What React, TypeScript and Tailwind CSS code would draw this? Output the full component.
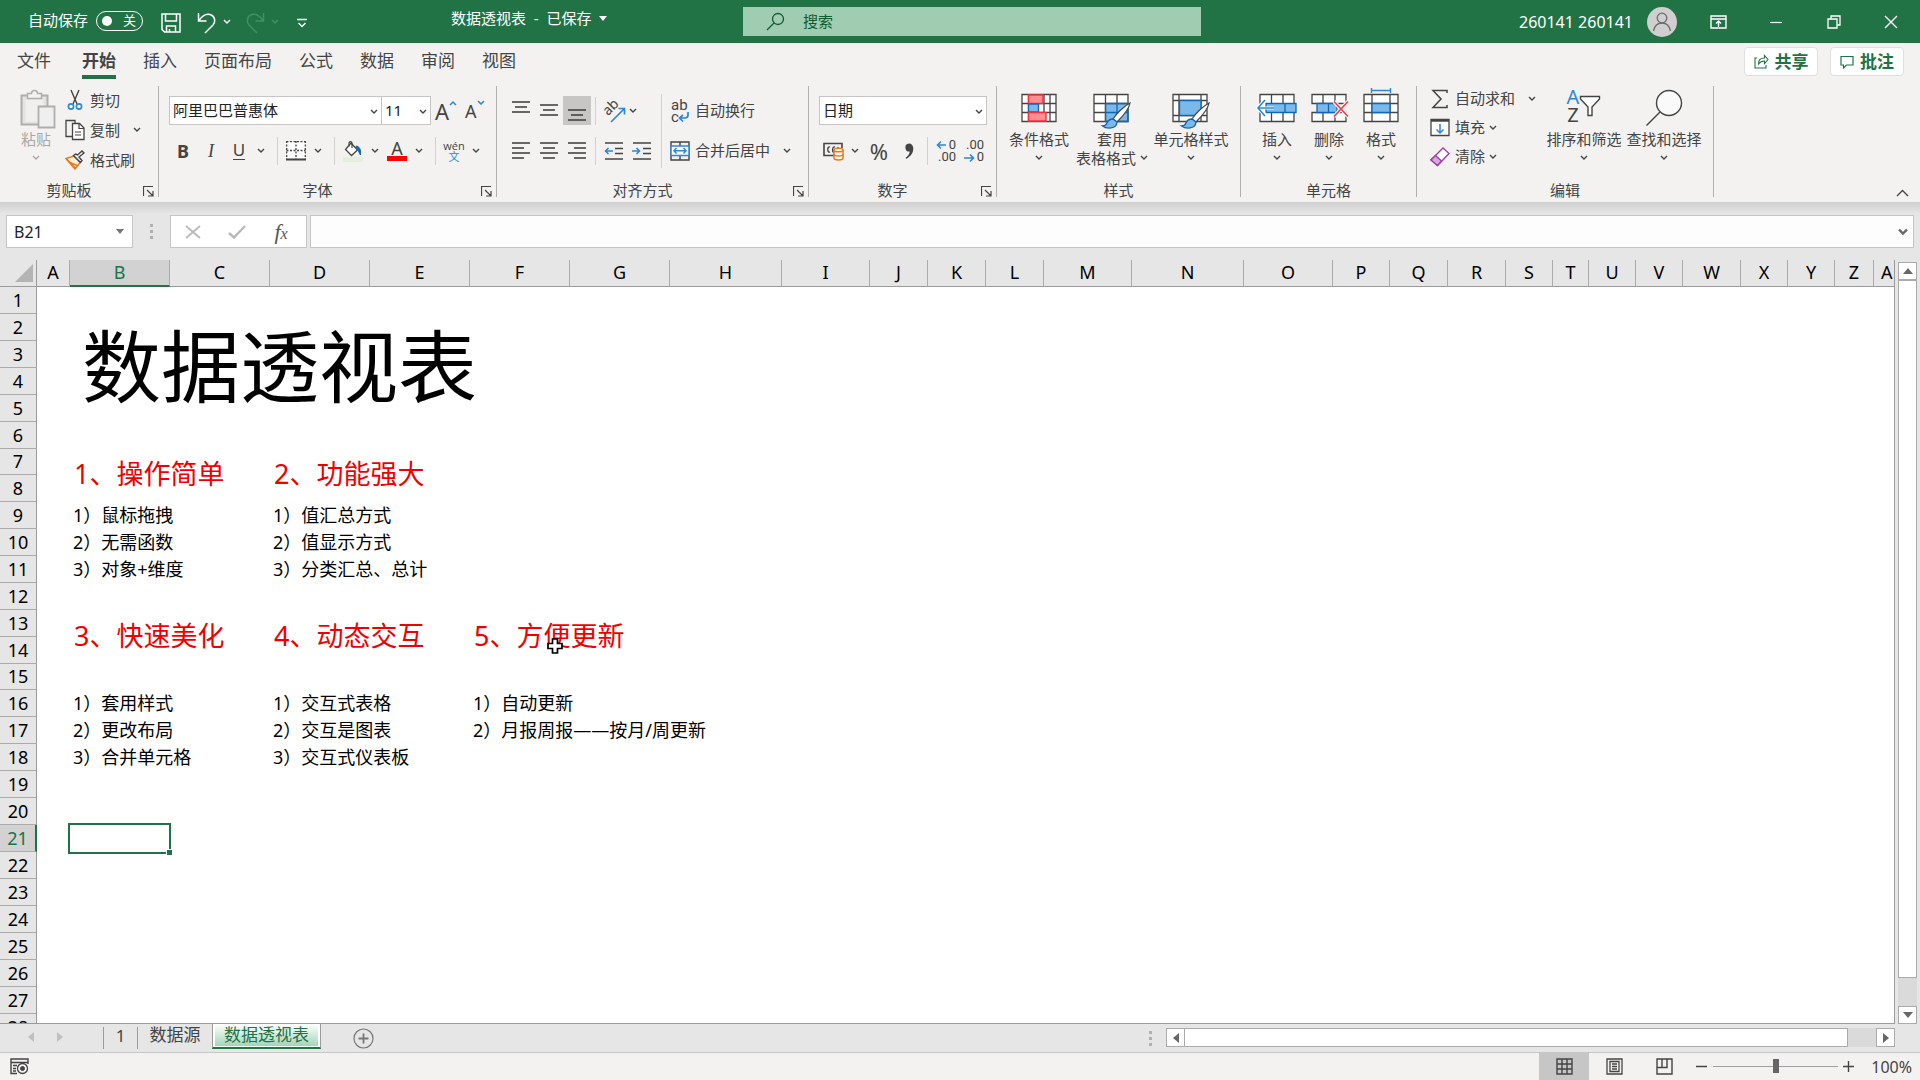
import type { ReactNode } from 'react';
import { clsx } from 'clsx';

const INK = '#444444';
const BLUE = '#2b88d8';

const tabs = ['文件', '开始', '插入', '页面布局', '公式', '数据', '审阅', '视图'];

const columns = [
  { name: 'A', width: 33 },
  { name: 'B', width: 100 },
  { name: 'C', width: 100 },
  { name: 'D', width: 100 },
  { name: 'E', width: 100 },
  { name: 'F', width: 100 },
  { name: 'G', width: 100 },
  { name: 'H', width: 112 },
  { name: 'I', width: 88 },
  { name: 'J', width: 58 },
  { name: 'K', width: 58 },
  { name: 'L', width: 58 },
  { name: 'M', width: 88 },
  { name: 'N', width: 112 },
  { name: 'O', width: 89 },
  { name: 'P', width: 57 },
  { name: 'Q', width: 58 },
  { name: 'R', width: 58 },
  { name: 'S', width: 47 },
  { name: 'T', width: 36 },
  { name: 'U', width: 47 },
  { name: 'V', width: 47 },
  { name: 'W', width: 58 },
  { name: 'X', width: 47 },
  { name: 'Y', width: 47 },
  { name: 'Z', width: 39 },
];

type Cell = {
  row: number;
  col: string;
  text: string;
  kind?: 'title' | 'heading';
};

const cells: Cell[] = [
  { row: 2, col: 'B', text: '数据透视表', kind: 'title' },
  { row: 7, col: 'B', text: '1、操作简单', kind: 'heading' },
  { row: 7, col: 'D', text: '2、功能强大', kind: 'heading' },
  { row: 9, col: 'B', text: '1）鼠标拖拽' },
  { row: 10, col: 'B', text: '2）无需函数' },
  { row: 11, col: 'B', text: '3）对象+维度' },
  { row: 9, col: 'D', text: '1）值汇总方式' },
  { row: 10, col: 'D', text: '2）值显示方式' },
  { row: 11, col: 'D', text: '3）分类汇总、总计' },
  { row: 13, col: 'B', text: '3、快速美化', kind: 'heading' },
  { row: 13, col: 'D', text: '4、动态交互', kind: 'heading' },
  { row: 13, col: 'F', text: '5、方便更新', kind: 'heading' },
  { row: 16, col: 'B', text: '1）套用样式' },
  { row: 17, col: 'B', text: '2）更改布局' },
  { row: 18, col: 'B', text: '3）合并单元格' },
  { row: 16, col: 'D', text: '1）交互式表格' },
  { row: 17, col: 'D', text: '2）交互是图表' },
  { row: 18, col: 'D', text: '3）交互式仪表板' },
  { row: 16, col: 'F', text: '1）自动更新' },
  { row: 17, col: 'F', text: '2）月报周报——按月/周更新' },
];

const colIndex = (name: string) => columns.findIndex((c) => c.name === name);

// Size of the merged block each kind of cell takes up
function spanOf(cell: Cell) {
  if (cell.kind === 'title') return { cols: 5, rows: 4 };
  if (cell.kind === 'heading') return { cols: 2, rows: 2 };
  return { cols: 1, rows: 1 };
}

function isCovered(row: number, col: number) {
  return cells.some((cell) => {
    const { cols, rows } = spanOf(cell);
    const start = colIndex(cell.col);
    const inside = row >= cell.row && row < cell.row + rows && col >= start && col < start + cols;
    return inside && !(row === cell.row && col === start);
  });
}

/* ---------- icons ---------- */

function Icon({ w, h, children, color = INK }: { w: number; h: number; children: ReactNode; color?: string }) {
  return (
    <svg width={w} height={h} viewBox={`0 0 ${w} ${h}`} fill="none" stroke={color} className="shrink-0" aria-hidden="true">
      {children}
    </svg>
  );
}

function Chevron({ color = INK }: { color?: string }) {
  return (
    <Icon w={8} h={6} color={color}>
      <path d="M1 1l3 3 3-3" strokeWidth="1.4" />
    </Icon>
  );
}

const Lines = ({ rows }: { rows: [number, number, number][] }) => (
  <Icon w={20} h={22}>
    {rows.map(([y, x1, x2]) => (
      <path key={y} d={`M${x1} ${y}H${x2}`} strokeWidth="1.6" />
    ))}
  </Icon>
);

const PasteIcon = () => (
  <Icon w={36} h={40} color="#b0aeac">
    <path d="M1.5 6.5h26v29h-26z" fill="#e3e2e1" strokeWidth="2" />
    <path d="M5.5 10.5h18v22h-18z" fill="#f0efee" strokeWidth="0" />
    <path d="M7.5 9.5v-5h4c0-2 1.5-3 3-3s3 1 3 3h4v5z" fill="#f3f2f1" strokeWidth="1.5" />
    <path d="M18.5 17.5h16v21h-16z" fill="#f0eff0" strokeWidth="1.8" />
  </Icon>
);

const CutIcon = () => (
  <Icon w={16} h={22}>
    <path d="M4 1l6 14M12 1L6 15" strokeWidth="1.4" />
    <circle cx="4" cy="17.5" r="2.6" stroke={BLUE} strokeWidth="1.6" />
    <circle cx="12" cy="17.5" r="2.6" stroke={BLUE} strokeWidth="1.6" />
  </Icon>
);

const CopyIcon = () => (
  <Icon w={20} h={22}>
    <path d="M8 17.5H1V1.5h9V4" strokeWidth="1.3" />
    <path d="M7.500 4.500h7l4.500 4.500v11.500H7.500z" fill="#fff" strokeWidth="1.3" />
    <path d="M14 4.500V9.500h5M10 13h6M10 16h6" strokeWidth="1.2" />
  </Icon>
);

const PainterIcon = () => (
  <Icon w={20} h={20}>
    <path d="M1 8.500l8-2.500 6 6.500-5 6.500z" fill="#fdf0e0" stroke="#e8791c" strokeWidth="1.5" />
    <path d="M1.500 9l9 9.500M4 12l8 3.500" stroke="#e8791c" strokeWidth="1.5" />
    <path d="M8.500 5.500l7 7 1.500-2-3-3.500 5-4-2-2-4.500 4L10.500 4z" fill="#f3f2f1" strokeWidth="1.4" />
  </Icon>
);

const LauncherIcon = () => (
  <Icon w={11} h={11}>
    <path d="M.5 10V.5H10M4 4l5.500 5.500M10 5v5H5" strokeWidth="1.2" />
  </Icon>
);

const BordersIcon = () => (
  <Icon w={20} h={20}>
    <path d="M1 1h18v16H1z" fill="#fff" stroke="none" />
    <path d="M.5 .7h19M.5 9.500h19M.7 0v18M10 0v18M19.300 0v18" strokeDasharray="2 1.5" strokeWidth="1.3" />
    <path d="M0 18.500h20" strokeWidth="2" />
  </Icon>
);

const FillIcon = () => (
  <Icon w={22} h={22}>
    <path d="M9 3l6.500 7-6 5.500-6-6z" fill="#fff" strokeWidth="1.3" />
    <path d="M7 6.500V3c0-1.800 3-1.800 3 0v5" strokeWidth="1.2" />
    <path d="M14 6c3.500.5 5 3 4.500 9-1.500-1.500-1.500-4-3-5.500z" fill="#1267b4" stroke="#1267b4" />
    <path d="M1 17h20v5H1z" fill="#e2f0dc" stroke="none" />
  </Icon>
);

const OrientIcon = () => (
  <span className="relative flex size-6 items-center justify-center">
    <span className="-translate-x-1 -translate-y-1 -rotate-45 text-sm leading-none">ab</span>
    <span className="absolute right-0 bottom-0">
      <Icon w={16} h={17} color={BLUE}>
        <path d="M1 16L14 3M8.500 2.500h6v6" strokeWidth="1.7" />
      </Icon>
    </span>
  </span>
);

const IndentIcon = ({ out = false }: { out?: boolean }) => (
  <Icon w={20} h={20}>
    <path d="M1 2h18M11 7.500h8M11 12.500h8M1 18h18" strokeWidth="1.5" />
    <path d={out ? 'M9 10H1.500M4.500 7l-3 3 3 3' : 'M0 10h7.500M4.500 7l3 3-3 3'} stroke={BLUE} strokeWidth="1.6" />
  </Icon>
);

const WrapIcon = () => (
  <span className="relative block h-6 w-[18px] text-left font-[Roboto,sans-serif] text-[15px] leading-3">
    ab
    <br />c
    <span className="absolute right-0 bottom-0">
      <Icon w={11} h={12} color={BLUE}>
        <path d="M10 1v3c0 2-1 3-3 3H2M5 4L1.500 7 5 10.500" strokeWidth="1.7" />
      </Icon>
    </span>
  </span>
);

const MergeIcon = () => (
  <Icon w={20} h={20}>
    <path d="M1 1h18v18H1zM10 1v4M10 15v4" strokeWidth="1.4" />
    <path d="M1 5h18v9.500H1z" fill="#fff" stroke={BLUE} strokeWidth="1.5" />
    <path d="M4 9.800h12M6.500 7L4 9.800l2.500 2.700M13.500 7L16 9.800l-2.500 2.700" stroke={BLUE} strokeWidth="1.5" />
  </Icon>
);

const AccountingIcon = () => (
  <Icon w={21} h={20}>
    <path d="M11 14.500H1v-12h18V7" strokeWidth="1.6" />
    <path d="M7 6c-3-1-3 6 0 5M12 6c-3-1-3 5-1 5.500M15 6v2" strokeWidth="1.4" />
    <path d="M11 9v8c0 2.500 9 2.500 9 0V9" fill="#fff" stroke="#e8791c" strokeWidth="1.5" />
    <ellipse cx="15.500" cy="9" rx="4.500" ry="1.800" fill="#fff" stroke="#e8791c" strokeWidth="1.5" />
    <path d="M11 13.200c0 2.300 9 2.300 9 0" stroke="#e8791c" strokeWidth="1.4" />
  </Icon>
);

const CommaIcon = () => (
  <Icon w={12} h={18}>
    <path d="M6 1.500a4 4 0 1 0 .8 8C6.500 12 5 14 2.500 15.800l.8 1C7.500 14.500 10.300 11 10.300 6.500 10.300 3.500 8.500 1.500 6 1.500z" fill={INK} stroke="none" />
  </Icon>
);

const DecimalIcon = ({ more = false }: { more?: boolean }) => (
  <span className="relative block h-6 w-5 text-right font-[Roboto,sans-serif] text-[13px] leading-3">
    {more ? '0' : '.00'}
    <br />
    {more ? '.00' : '0'}
    <span className={clsx('absolute left-0', more ? 'top-px' : 'bottom-0')}>
      <Icon w={11} h={10} color={BLUE}>
        <path d={more ? 'M10 5H1.500M5 1.500L1.500 5 5 8.500' : 'M0 5h9.500M6 1.500L9.500 5 6 8.500'} strokeWidth="1.6" />
      </Icon>
    </span>
  </span>
);

const BrushTip = () => (
  <>
    <path d="M38 9c-6 3-14 11-17 16l4 3c5-5 12-13 13-19z" fill="#fff" strokeWidth="1.2" />
    <path d="M21 25c-3 0-5 1.500-6 4-.8 2-2.500 3-4.500 3 4 3 14 3.500 14.500-4z" fill="#7bb9ea" stroke="#1267b4" strokeWidth="1.3" />
  </>
);

const ConditionalIcon = () => (
  <Icon w={38} h={40}>
    <path d="M2 6.500h34v27H2zM2 15.500h34M2 24.500h34M8.500 6.500v27M24 6.500v27M30 6.500v27" fill="#fff" strokeWidth="1.3" />
    <path d="M8.500 7h14.500v8.500H8.500z" fill="#ff8e95" stroke="#f3303a" strokeWidth="1.4" />
    <path d="M8.500 16h10v8h-10z" fill="#7bb9ea" stroke="#1267b4" strokeWidth="1.3" />
    <path d="M8.500 24.500h17.500V33H8.500z" fill="#ff8e95" stroke="#f3303a" strokeWidth="1.4" />
  </Icon>
);

const TableStyleIcon = () => (
  <Icon w={40} h={42}>
    <path d="M2 6.500h34v27H2z" fill="#fff" stroke="none" />
    <path d="M13.500 15.500H36v18H13.500z" fill="#7bb9ea" stroke="none" />
    <path d="M2 6.500h34v27H2zM2 15.500h34M2 24.500h12M13.500 6.500v27M25 6.500v9" strokeWidth="1.3" />
    <path d="M13.500 15.500H36v18H13.500zM13.500 24.500H36M25 15.500v18" stroke="#1267b4" strokeWidth="1.3" />
    <g transform="translate(0 6)">
      <BrushTip />
    </g>
  </Icon>
);

const CellStyleIcon = () => (
  <Icon w={40} h={42}>
    <path d="M2 6.500h34v27H2zM2 12.500h34M2 27.500h34M8 6.500v27M30 6.500v27" fill="#fff" strokeWidth="1.3" />
    <path d="M8.500 12.500h21.500v15H8.500z" fill="#7bb9ea" stroke="#1267b4" strokeWidth="1.3" />
    <g transform="translate(0 6)">
      <BrushTip />
    </g>
  </Icon>
);

const InsertIcon = () => (
  <Icon w={42} h={40}>
    <path d="M4 6.500h34v27H4zM15.500 6.500v27M27 6.500v27" fill="#fff" strokeWidth="1.3" />
    <path d="M10 15.500h30v9H10z" fill="#7bb9ea" stroke="#1267b4" strokeWidth="1.3" />
    <path d="M29 15.500v9" stroke="#1267b4" strokeWidth="1.3" />
    <path d="M10 11.500L2 20l8 8" stroke="#fff" strokeWidth="4" />
    <path d="M18 20H2" stroke="#fff" strokeWidth="3" />
    <path d="M18 20H2M9 12L2 20l7 8" stroke={BLUE} strokeWidth="1.6" />
  </Icon>
);

const DeleteIcon = () => (
  <Icon w={40} h={40}>
    <path d="M3 6.500h34v9H3zM3 24.500h34v9H3zM14 6.500v9M26 6.500v9M14 24.500v9M26 24.500v9" fill="#fff" strokeWidth="1.3" />
    <path d="M8 15.500h20v9H8zM19.500 15.500v9" fill="#7bb9ea" stroke="#1267b4" strokeWidth="1.3" />
    <path d="M25 13.500l14 15M39 13.500l-14 15" stroke="#f3f2f1" strokeWidth="4" />
    <path d="M25 13.500l14 15M39 13.500l-14 15" stroke="#e8404a" strokeWidth="1.6" />
  </Icon>
);

const FormatIcon = () => (
  <Icon w={38} h={40}>
    <path d="M2 6.500h34v27H2zM2 15.500h34M2 24.500h34M10 6.500v27M28 6.500v27" fill="#fff" strokeWidth="1.3" />
    <path d="M10 15.500h18v9H10z" fill="#7bb9ea" stroke="#1267b4" strokeWidth="1.3" />
    <path d="M9.500 2.500h19M9.500 0v5M28.500 0v5" stroke={BLUE} strokeWidth="1.4" />
  </Icon>
);

const SumIcon = () => (
  <Icon w={18} h={20}>
    <path d="M16 4V1.500H2l8 8.500-8 8.500h14V16" strokeWidth="1.5" />
  </Icon>
);

const FillDownIcon = () => (
  <Icon w={20} h={20}>
    <path d="M1 1.500h18v16H1z" fill="#fff" strokeWidth="1.3" />
    <path d="M1 2.500h18" strokeWidth="2.5" />
    <path d="M10 6v9M6.500 11.500L10 15l3.500-3.500" stroke={BLUE} strokeWidth="1.5" />
  </Icon>
);

const EraserIcon = () => (
  <Icon w={20} h={20} color="#a03fa8">
    <path d="M1 13L13 1l6 5.500L7.500 18.500z" fill="#fff" strokeWidth="1.4" />
    <path d="M1 13l4.500-4.500 6 5.500-4 4.500z" fill="#dca4e0" strokeWidth="1.4" />
  </Icon>
);

const SortFilterIcon = () => (
  <span className="flex items-center">
    <span className="flex flex-col text-xl leading-[18px]">
      <span className="text-[#2b88d8]">A</span>
      <span>Z</span>
    </span>
    <Icon w={22} h={24}>
      <path d="M1.500 2.500h19v2.500l-7.500 8v8.500H9v-8.500l-7.500-8z" fill="#fff" strokeWidth="1.4" />
    </Icon>
  </span>
);

const FindIcon = () => (
  <Icon w={38} h={40}>
    <circle cx="24" cy="15" r="12.500" fill="#fbfafa" strokeWidth="1.4" />
    <path d="M15 24L1.500 37.500" strokeWidth="1.5" />
  </Icon>
);

/* ---------- ribbon parts ---------- */

function Group({ label, launcher, className, children }: { label: string; launcher?: boolean; className: string; children: ReactNode }) {
  return (
    <section aria-label={label} className={clsx('flex h-[111px] shrink-0 flex-col border-r border-[#b3b1af]', className)}>
      <div className="flex h-[97px] items-start">{children}</div>
      <div className={clsx('relative flex h-[14px] items-center justify-center leading-none', launcher && 'pr-5')}>
        <span>{label}</span>
        {launcher && (
          <button aria-label={`${label}设置`} className="absolute right-1 bottom-0">
            <LauncherIcon />
          </button>
        )}
      </div>
    </section>
  );
}

function SmallButton({ icon, label, caret }: { icon: ReactNode; label: string; caret?: 'near' | 'far' }) {
  return (
    <button className="flex items-center whitespace-nowrap">
      <span className="flex w-[30px] items-center justify-center">{icon}</span>
      {label}
      {caret && (
        <span className={clsx('flex w-4 justify-center', caret === 'far' && 'ml-[9px]')}>
          <Chevron />
        </span>
      )}
    </button>
  );
}

function BigButton({ icon, label, second, className }: { icon: ReactNode; label: string; second?: string; className: string }) {
  return (
    <button className={clsx('flex flex-col items-center whitespace-nowrap', className)}>
      <span className="flex h-[43px] items-start justify-center pt-[2px]">{icon}</span>
      <span className="leading-5">{label}</span>
      <span className="flex h-[18px] items-center gap-1 leading-[18px]">
        {second}
        <Chevron />
      </span>
    </button>
  );
}

function Tool({ label, on, wide, children }: { label: string; on?: boolean; wide?: boolean; children: ReactNode }) {
  return (
    <button aria-label={label} className={clsx('flex h-[29px] items-center justify-center', wide ? 'w-8' : 'w-7', on && 'bg-[#c8c6c4]')}>
      {children}
    </button>
  );
}

const ToolCaret = ({ label }: { label: string }) => (
  <button aria-label={label} className="flex h-[29px] w-4 items-center justify-center">
    <Chevron />
  </button>
);

const Divider = ({ near }: { near?: boolean }) => <span className={clsx('mr-1 h-7 w-px bg-[#d2d0ce]', near ? 'ml-1' : 'ml-2')} />;

function Combo({ label, value, className }: { label: string; value: string; className: string }) {
  return (
    <div className={clsx('relative h-[29px] border border-[#c8c6c4] bg-white', className)}>
      <select aria-label={label} className="h-full w-full appearance-none pl-[3px] text-[#222]">
        <option>{value}</option>
      </select>
      <span className="pointer-events-none absolute top-3 right-[3px]">
        <Chevron />
      </span>
    </div>
  );
}

function TitleBar() {
  return (
    <header className="grid h-[43px] shrink-0 grid-cols-[743fr_458fr_719fr] bg-[#217346] text-white">
      <div className="flex items-center pb-[2px] pl-7">
        <span id="autosave">自动保存</span>
        <button role="switch" aria-checked="false" aria-labelledby="autosave" className="ml-2 flex h-5 w-[47px] items-center justify-between rounded-full border border-white pr-[6px] pl-[5px]">
          <span className="size-[10px] rounded-full bg-white" />
          <span className="text-[13px] leading-none">关</span>
        </button>
        <button aria-label="保存" className="ml-[18px] pt-1">
          <Icon w={20} h={20} color="#fff">
            <path d="M1 1h18v18H3.500L1 16.500zM4.500 1v7h11V1M5.500 19v-6h9v6M8.500 19v-3" strokeWidth="1.5" />
          </Icon>
        </button>
        <button aria-label="撤消" className="ml-4 pt-1">
          <Icon w={20} h={22} color="#fff">
            <path d="M1.500 1v8h8M2 8.500C5 4 9 1.500 13 2.500c5 1.500 6 7 3 10.500l-8 8" strokeWidth="1.5" />
          </Icon>
        </button>
        <button aria-label="撤消列表" className="ml-[6px] pt-[2px]">
          <Chevron color="#fff" />
        </button>
        <button aria-label="恢复" className="ml-[14px] pt-1">
          <Icon w={20} h={22} color="#3f9062">
            <path d="M18.500 1v8h-8M18 8.500C15 4 11 1.500 7 2.500c-5 1.500-6 7-3 10.500l8 8" strokeWidth="1.5" />
          </Icon>
        </button>
        <button aria-label="恢复列表" className="ml-[6px] pt-[2px]">
          <Chevron color="#3f9062" />
        </button>
        <button aria-label="自定义快速访问工具栏" className="ml-[18px] pt-1">
          <Icon w={10} h={10} color="#fff">
            <path d="M0 1.500h10M1.500 5L5 8.500 8.500 5" strokeWidth="1.4" />
          </Icon>
        </button>
        <button className="mr-auto ml-36 flex items-center gap-2 pb-1">
          数据透视表&nbsp; - &nbsp;已保存
          <Icon w={8} h={5} color="none">
            <path d="M0 0h8L4 5z" fill="#fff" />
          </Icon>
        </button>
      </div>
      <label className="my-[7px] flex items-center bg-[#a0cdb2] pl-[23px] text-[#0f5a2f]">
        <Icon w={20} h={20} color="#0f5a2f">
          <circle cx="12" cy="7" r="5.500" strokeWidth="1.3" />
          <path d="M8 11L1 18" strokeWidth="1.3" />
        </Icon>
        <input type="text" aria-label="搜索" placeholder="搜索" className="ml-[17px] min-w-0 flex-1 bg-transparent outline-none placeholder:text-[#0f5a2f]" />
      </label>
      <div className="flex items-center justify-end">
        <span className="text-base leading-none">260141 260141</span>
        <button aria-label="帐户" className="mr-3 ml-[14px] flex size-[30px] items-center justify-center rounded-full bg-[#d0cfcf]">
          <Icon w={20} h={20} color="#6b6b6b">
            <circle cx="10" cy="6" r="4.800" strokeWidth="1.3" />
            <path d="M1.500 19c1-5 4-8 8.500-8s7.500 3 8.500 8" strokeWidth="1.3" />
          </Icon>
        </button>
        <button aria-label="功能区显示选项" className="flex w-[58px] justify-center">
          <Icon w={17} h={14} color="#fff">
            <path d="M1 1h15v12H1zM1 4h15M8.500 12V6M6 8.500L8.500 6 11 8.500" strokeWidth="1.4" />
          </Icon>
        </button>
        <button aria-label="最小化" className="flex w-[58px] justify-center">
          <Icon w={14} h={14} color="#fff">
            <path d="M1 7.500h12" strokeWidth="1.2" />
          </Icon>
        </button>
        <button aria-label="向下还原" className="flex w-[57px] justify-center">
          <Icon w={14} h={14} color="#fff">
            <path d="M1 4h9v9H1zM4 4V1h9v9h-3" strokeWidth="1.3" />
          </Icon>
        </button>
        <button aria-label="关闭" className="flex w-[58px] justify-center">
          <Icon w={14} h={14} color="#fff">
            <path d="M1 1l12 12M13 1L1 13" strokeWidth="1.4" />
          </Icon>
        </button>
      </div>
    </header>
  );
}

function TabStrip() {
  return (
    <div className="flex h-9 shrink-0 items-stretch bg-[#f3f2f1] pr-4 pl-[17px]">
      <nav className="flex gap-[27px] text-[17px]">
        {tabs.map((tab) => (
          <a
            key={tab}
            href="#"
            className={clsx('flex items-center border-y-4 border-transparent first:mr-1', tab === '开始' && 'border-b-[#217346] font-bold')}
          >
            {tab}
          </a>
        ))}
      </nav>
      <div className="mt-1 ml-auto flex gap-3 text-[17px] font-bold text-[#217346]">
        <button className="flex h-[29px] w-[74px] items-center justify-center gap-[6px] rounded-sm border border-[#e1dfdd] bg-white">
          <Icon w={15} h={15} color="#217346">
            <path d="M3 4H1v10h11v-3M4.500 10c0-4 2-6 6-6V1.500L14 5.500l-3.500 4V7C7.500 7 6 8 4.500 10z" strokeWidth="1.1" />
          </Icon>
          共享
        </button>
        <button className="flex h-[29px] w-[74px] items-center justify-center gap-[6px] rounded-sm border border-[#e1dfdd] bg-white">
          <Icon w={14} h={14} color="#217346">
            <path d="M1 1.500h12v8.500H6.500L3.500 13v-3H1z" strokeWidth="1.2" />
          </Icon>
          批注
        </button>
      </div>
    </div>
  );
}

function Ribbon() {
  return (
    <div className="flex shrink-0 bg-[#f3f2f1] pt-[7px] pb-[5px]">
      <Group label="剪贴板" launcher className="w-[159px]">
        <button className="ml-[14px] flex w-12 flex-col items-center text-[#aaa8a6]">
          <span className="flex h-[43px] items-start pt-[3px]">
            <PasteIcon />
          </span>
          <span className="pr-1 leading-5">粘贴</span>
          <span className="flex h-[18px] items-center pr-1">
            <Chevron color="#aaa8a6" />
          </span>
        </button>
        <div className="-mt-px -ml-[2px] grid auto-rows-[30px] justify-items-start">
          <SmallButton icon={<CutIcon />} label="剪切" />
          <SmallButton icon={<CopyIcon />} label="复制" caret="far" />
          <SmallButton icon={<PainterIcon />} label="格式刷" />
        </div>
      </Group>

      <Group label="字体" launcher className="w-[338px]">
        <div className="ml-[10px] flex flex-col gap-[11px] pt-[10px]">
          <div className="flex items-center">
            <Combo label="字体" value="阿里巴巴普惠体" className="w-[213px]" />
            <Combo label="字号" value="11" className="-ml-px w-[50px]" />
            <button aria-label="增大字号" className="ml-1 flex items-start">
              <span className="text-[22px] leading-6">A</span>
              <Icon w={8} h={8} color={BLUE}>
                <path d="M1 6l3-3 3 3" strokeWidth="1.5" />
              </Icon>
            </button>
            <button aria-label="减小字号" className="ml-2 flex items-start">
              <span className="text-lg leading-7">A</span>
              <Icon w={8} h={8} color={BLUE}>
                <path d="M1 4l3 3 3-3" strokeWidth="1.5" />
              </Icon>
            </button>
          </div>
          <div className="flex items-center">
            <Tool label="加粗">
              <span className="text-lg leading-none font-bold">B</span>
            </Tool>
            <Tool label="倾斜">
              <span className="font-['Liberation_Serif',serif] text-lg leading-none italic">I</span>
            </Tool>
            <Tool label="下划线">
              <span className="border-b border-[#444] text-[17px] leading-[18px]">U</span>
            </Tool>
            <ToolCaret label="下划线选项" />
            <Divider />
            <Tool label="边框">
              <BordersIcon />
            </Tool>
            <ToolCaret label="边框选项" />
            <Divider />
            <Tool label="填充颜色">
              <FillIcon />
            </Tool>
            <ToolCaret label="填充颜色选项" />
            <Tool label="字体颜色">
              <span className="w-5 border-b-[5px] border-[#ff0000] text-center text-lg leading-4">A</span>
            </Tool>
            <ToolCaret label="字体颜色选项" />
            <Divider />
            <Tool label="拼音">
              <span className="flex flex-col items-center font-['Open_Sans','Noto_Sans_CJK_SC',sans-serif] text-[11px] leading-[11px]">
                wén
                <span className="text-[#2b88d8]">文</span>
              </span>
            </Tool>
            <ToolCaret label="拼音选项" />
          </div>
        </div>
      </Group>

      <Group label="对齐方式" launcher className="w-[312px]">
        <div className="ml-[10px] flex w-[150px] flex-col gap-[11px] pt-[10px]">
          <div className="flex items-center">
            <Tool label="顶端对齐">
              <Lines rows={[[2, 1, 19], [7, 4, 16], [12, 1, 19]]} />
            </Tool>
            <Tool label="垂直居中">
              <Lines rows={[[5, 1, 19], [10, 4, 16], [15, 1, 19]]} />
            </Tool>
            <Tool label="底端对齐" on>
              <Lines rows={[[10, 1, 19], [15, 4, 16], [20, 1, 19]]} />
            </Tool>
            <Divider near />
            <Tool label="方向">
              <OrientIcon />
            </Tool>
            <button aria-label="方向选项" className="flex h-[29px] w-[10px] items-center justify-center">
              <Chevron />
            </button>
          </div>
          <div className="flex items-center">
            <Tool label="左对齐">
              <Lines rows={[[3, 1, 19], [8, 1, 13], [13, 1, 19], [18, 1, 13]]} />
            </Tool>
            <Tool label="居中">
              <Lines rows={[[3, 1, 19], [8, 4, 16], [13, 1, 19], [18, 4, 16]]} />
            </Tool>
            <Tool label="右对齐">
              <Lines rows={[[3, 1, 19], [8, 7, 19], [13, 1, 19], [18, 7, 19]]} />
            </Tool>
            <Divider near />
            <Tool label="减少缩进量">
              <IndentIcon out />
            </Tool>
            <Tool label="增加缩进量">
              <IndentIcon />
            </Tool>
          </div>
        </div>
        <span className="mt-2 mr-1 ml-1 h-[74px] w-px bg-[#d2d0ce]" />
        <div className="-ml-px grid auto-rows-[29px] justify-items-start gap-[11px] pt-[10px]">
          <SmallButton icon={<WrapIcon />} label="自动换行" />
          <SmallButton icon={<MergeIcon />} label="合并后居中" caret="far" />
        </div>
      </Group>

      <Group label="数字" launcher className="w-[188px]">
        <div className="ml-[10px] flex flex-col gap-[11px] pt-[10px]">
          <Combo label="数字格式" value="日期" className="w-[168px]" />
          <div className="flex items-center">
            <Tool label="会计数字格式">
              <AccountingIcon />
            </Tool>
            <ToolCaret label="会计数字格式选项" />
            <Tool label="百分比样式" wide>
              <span className="text-[22px] leading-none">%</span>
            </Tool>
            <Tool label="千位分隔样式">
              <CommaIcon />
            </Tool>
            <Divider near />
            <Tool label="增加小数位数">
              <DecimalIcon more />
            </Tool>
            <Tool label="减少小数位数">
              <DecimalIcon />
            </Tool>
          </div>
        </div>
      </Group>

      <Group label="样式" className="w-[244px]">
        <BigButton icon={<ConditionalIcon />} label="条件格式" className="ml-[6px] w-[72px]" />
        <BigButton icon={<TableStyleIcon />} label="套用" second="表格格式" className="w-[74px]" />
        <BigButton icon={<CellStyleIcon />} label="单元格样式" className="w-[84px]" />
      </Group>

      <Group label="单元格" className="w-[176px]">
        <BigButton icon={<InsertIcon />} label="插入" className="ml-[10px] w-[52px]" />
        <BigButton icon={<DeleteIcon />} label="删除" className="w-[52px]" />
        <BigButton icon={<FormatIcon />} label="格式" className="w-[52px]" />
      </Group>

      <Group label="编辑" className="w-[297px]">
        <div className="-mt-[2px] ml-2 grid w-[119px] auto-rows-[29px] justify-items-start">
          <SmallButton icon={<SumIcon />} label="自动求和" caret="far" />
          <SmallButton icon={<FillDownIcon />} label="填充" caret="near" />
          <SmallButton icon={<EraserIcon />} label="清除" caret="near" />
        </div>
        <BigButton icon={<SortFilterIcon />} label="排序和筛选" className="w-20" />
        <BigButton icon={<FindIcon />} label="查找和选择" className="w-20" />
      </Group>

      <button aria-label="折叠功能区" className="mr-[11px] ml-auto self-end">
        <Icon w={13} h={8}>
          <path d="M1 7l5.500-5.500L12 7" strokeWidth="1.4" />
        </Icon>
      </button>
    </div>
  );
}

const Dots = () => (
  <span className="flex flex-col gap-[3px]" aria-hidden="true">
    <span className="size-[3px] bg-[#b0b0b0]" />
    <span className="size-[3px] bg-[#b0b0b0]" />
    <span className="size-[3px] bg-[#b0b0b0]" />
  </span>
);

function FormulaBar() {
  return (
    <div className="flex h-[58px] shrink-0 items-start bg-linear-to-b from-[#cfcfcf] to-[#e6e6e6] to-20% pt-[13px] pr-[6px] pl-[6px]">
      <div className="flex h-[33px] w-[127px] items-center border border-[#c6c6c6] bg-white pr-2">
        <input aria-label="名称框" defaultValue="B21" className="h-full min-w-0 flex-1 pl-[7px] text-base text-[#222] outline-none" />
        <button aria-label="名称列表">
          <Icon w={8} h={5} color="none">
            <path d="M0 0h8L4 5z" fill="#777" />
          </Icon>
        </button>
      </div>
      <div className="flex h-[33px] w-[37px] items-center justify-center">
        <Dots />
      </div>
      <div className="flex h-[33px] w-[137px] items-center border border-[#c6c6c6] bg-white">
        <button aria-label="取消" className="flex w-11 justify-center">
          <Icon w={16} h={14} color="#b9b9b9">
            <path d="M1 1l14 12M15 1L1 13" strokeWidth="1.8" />
          </Icon>
        </button>
        <button aria-label="输入" className="flex w-11 justify-center">
          <Icon w={18} h={14} color="#b9b9b9">
            <path d="M1 8l5 4.500L17 1" strokeWidth="2.4" />
          </Icon>
        </button>
        <button aria-label="插入函数" className="flex w-11 items-baseline justify-center font-['Liberation_Serif',serif] text-[#555] italic">
          <span className="text-[22px] leading-none">f</span>
          <span className="text-base leading-none">x</span>
        </button>
      </div>
      <div className="ml-[3px] flex h-[33px] flex-1 items-center border border-[#c6c6c6] bg-[#fdfdfd] pr-[5px]">
        <input aria-label="编辑栏" className="h-full min-w-0 flex-1 px-2 outline-none" />
        <button aria-label="展开编辑栏">
          <Icon w={10} h={8} color="#666">
            <path d="M1 1.500l4 4 4-4" strokeWidth="2.4" />
          </Icon>
        </button>
      </div>
    </div>
  );
}

function Sheet() {
  const rows = Array.from({ length: 28 }, (_, i) => i + 1);

  return (
    <div className="relative min-w-0 flex-1 overflow-hidden border-r border-b border-[#9b9b9b] bg-white">
      <table className="w-full table-fixed border-separate border-spacing-0 text-lg leading-none text-black">
        <colgroup>
          <col className="w-[37px]" />
          {columns.map((col) => (
            <col key={col.name} style={{ width: col.width }} />
          ))}
          <col />
        </colgroup>
        <thead>
          <tr className="h-[27px] bg-[#e6e6e6]">
            <th className="border-r border-b border-[#9b9b9b] p-0 pr-[3px]">
              <button aria-label="全选" className="ml-auto block">
                <Icon w={18} h={18} color="none">
                  <path d="M18 0v18H0z" fill="#b4b4b4" />
                </Icon>
              </button>
            </th>
            {columns.map((col) => (
              <th
                key={col.name}
                scope="col"
                className={clsx(
                  'h-[27px] border-r p-0 pb-[2px] font-normal',
                  col.name === 'B' ? 'border-r-[#ababab] border-b-2 border-b-[#217346] bg-[#d2d2d2] text-[#217346]' : 'border-b border-r-[#ababab] border-b-[#9b9b9b]'
                )}
              >
                {col.name}
              </th>
            ))}
            <th scope="col" className="border-b border-[#9b9b9b] p-0 pb-[2px] pl-[7px] text-left font-normal">
              A
            </th>
          </tr>
        </thead>
        <tbody>
          {rows.map((row) => (
            <tr key={row} className={row === 7 || row === 15 ? 'h-[26px]' : 'h-[27px]'}>
              <th
                scope="row"
                className={clsx(
                  'border-b border-b-[#ababab] p-0 pb-px font-normal',
                  row === 21 ? 'border-r-2 border-r-[#217346] bg-[#d2d2d2] text-[#217346]' : 'border-r border-r-[#9b9b9b] bg-[#e6e6e6]'
                )}
              >
                {row}
              </th>
              {columns.map((col, i) => {
                if (isCovered(row, i)) return null;
                const cell = cells.find((c) => c.row === row && c.col === col.name);
                if (!cell) {
                  return (
                    <td key={col.name} className="relative p-0">
                      {row === 21 && col.name === 'B' && (
                        <span className="absolute -inset-y-[2px] -right-px -left-[2px] border-2 border-[#217346]">
                          <span className="absolute -right-[3px] -bottom-[3px] size-[6px] border-t border-l border-white bg-[#217346]" />
                        </span>
                      )}
                    </td>
                  );
                }
                const span = spanOf(cell);
                return (
                  <td
                    key={col.name}
                    colSpan={span.cols}
                    rowSpan={span.rows}
                    className={clsx(
                      'p-0 whitespace-nowrap',
                      cell.kind === 'title' && 'pb-1 pl-3 text-[79px]',
                      cell.kind === 'heading' && 'pb-1 pl-1 text-[27px] text-[#f00000]',
                      !cell.kind && 'pb-[2px] pl-[3px]'
                    )}
                  >
                    {cell.text}
                  </td>
                );
              })}
              <td className="p-0" />
            </tr>
          ))}
        </tbody>
      </table>
      {/* mouse pointer */}
      <svg width="16" height="16" viewBox="0 0 16 16" className="absolute top-[378px] left-[547px]" aria-hidden="true">
        <path d="M5.500 1h5v4.500H15v5h-4.500V15h-5v-4.500H1v-5h4.500z" fill="#fff" stroke="#000" strokeWidth="1.7" />
      </svg>
    </div>
  );
}

function Arrow({ d, size = 'h-[18px] w-full', label }: { d: string; size?: string; label: string }) {
  return (
    <button aria-label={label} className={clsx('flex shrink-0 items-center justify-center border border-[#ababab] bg-white', size)}>
      <Icon w={10} h={10} color="none">
        <path d={d} fill="#666" />
      </Icon>
    </button>
  );
}

function BottomBar() {
  return (
    <div className="flex h-[29px] shrink-0 items-start border-b border-[#c6c6c6] bg-[#e6e6e6] pr-[25px] text-[17px] leading-none">
      <button aria-label="上一张" className="mt-2 ml-7">
        <Icon w={6} h={10} color="none">
          <path d="M6 0v10L0 5z" fill="#c0c0c0" />
        </Icon>
      </button>
      <button aria-label="下一张" className="mt-2 ml-[23px]">
        <Icon w={6} h={10} color="none">
          <path d="M0 0v10l6-5z" fill="#c0c0c0" />
        </Icon>
      </button>
      <button className="mt-[3px] ml-10 h-[22px] w-[35px] border-x border-[#9b9b9b] pb-[6px]">1</button>
      <button className="h-[22px] w-[74px] pb-[2px]">数据源</button>
      <button className="-mt-px h-[26px] w-[109px] border-x border-b-2 border-x-[#9b9b9b] border-b-[#217346] bg-white px-[2px] text-[#217346]">
        <span className="flex h-[22px] items-center justify-center bg-linear-to-b from-white to-[#a3d5ba] pb-[2px]">数据透视表</span>
      </button>
      <button aria-label="新工作表" className="mt-1 ml-8">
        <Icon w={21} h={21} color="#777">
          <circle cx="10.500" cy="10.500" r="9.500" strokeWidth="1.2" />
          <path d="M10.500 5.500v10M5.500 10.500h10" strokeWidth="1.8" />
        </Icon>
      </button>
      <span className="mt-[7px] mr-[14px] ml-auto">
        <Dots />
      </span>
      <div className="mt-1 flex h-[19px] w-5/13 bg-[#dadada]">
        <Arrow label="向左滚动" size="h-full w-[19px]" d="M8 0v10L2 5z" />
        <div className="-ml-px flex-1 border border-[#ababab] bg-white" />
        <Arrow label="向右滚动" size="ml-7 h-full w-[19px]" d="M2 0v10l6-5z" />
      </div>
    </div>
  );
}

function StatusBar() {
  return (
    <footer className="flex h-[27px] shrink-0 items-center bg-[#f3f2f1] pr-2 pl-[10px]">
      <button aria-label="录制宏">
        <Icon w={19} h={17}>
          <path d="M7 15.500H1V1h17v5M1 4.500h17M3 7.500h4M3 10.500h3M3 13h3" strokeWidth="1.4" />
          <circle cx="12.500" cy="10.500" r="5" strokeWidth="1.3" />
          <circle cx="12.500" cy="10.500" r="2" fill={INK} />
        </Icon>
      </button>
      <button aria-label="普通" className="ml-auto flex h-full w-[50px] items-center justify-center bg-[#c6c6c6]">
        <Icon w={17} h={17}>
          <path d="M1 1h15v15H1zM1 6h15M1 11h15M6 1v15M11 1v15" strokeWidth="1.4" />
        </Icon>
      </button>
      <button aria-label="页面布局" className="flex w-[50px] justify-center">
        <Icon w={17} h={17}>
          <path d="M1 1h15v15H1zM4 3.500h9v10H4zM6 6h5M6 8.500h5M6 11h5" strokeWidth="1.3" />
        </Icon>
      </button>
      <button aria-label="分页预览" className="flex w-[50px] justify-center">
        <Icon w={17} h={17}>
          <path d="M1 1h15v15H1zM1 9.500h10V1M6 1v8.500" strokeWidth="1.4" />
        </Icon>
      </button>
      <button aria-label="缩小" className="flex w-6 justify-center">
        <Icon w={11} h={11}>
          <path d="M0 5.500h11" strokeWidth="1.5" />
        </Icon>
      </button>
      <input
        type="range"
        aria-label="显示比例"
        defaultValue={50}
        className="h-4 w-[125px] appearance-none bg-transparent [&::-webkit-slider-runnable-track]:h-px [&::-webkit-slider-runnable-track]:bg-[#a0a0a0] [&::-webkit-slider-thumb]:-mt-[7px] [&::-webkit-slider-thumb]:h-[14px] [&::-webkit-slider-thumb]:w-[6px] [&::-webkit-slider-thumb]:appearance-none [&::-webkit-slider-thumb]:bg-[#666]"
      />
      <button aria-label="放大" className="flex w-5 justify-center">
        <Icon w={11} h={11}>
          <path d="M0 5.500h11M5.500 0v11" strokeWidth="1.4" />
        </Icon>
      </button>
      <button className="ml-[13px] text-base">100%</button>
    </footer>
  );
}

export default function App() {
  return (
    <div className="flex h-screen flex-col overflow-hidden bg-[#e6e6e6] font-['Noto_Sans','Noto_Sans_CJK_SC',sans-serif] text-[15px] text-[#444]">
      <TitleBar />
      <TabStrip />
      <Ribbon />
      <FormulaBar />
      <main className="flex min-h-0 flex-1">
        <Sheet />
        <div className="flex w-[25px] shrink-0 flex-col pt-[2px] pr-[3px] pl-[3px]">
          <Arrow label="向上滚动" d="M0 8h10L5 2z" />
          <div className="flex min-h-0 flex-1 flex-col bg-[#dadada] pb-7">
            <div className="flex-1 border border-[#ababab] bg-white" />
          </div>
          <Arrow label="向下滚动" d="M0 2h10L5 8z" />
        </div>
      </main>
      <BottomBar />
      <StatusBar />
    </div>
  );
}
